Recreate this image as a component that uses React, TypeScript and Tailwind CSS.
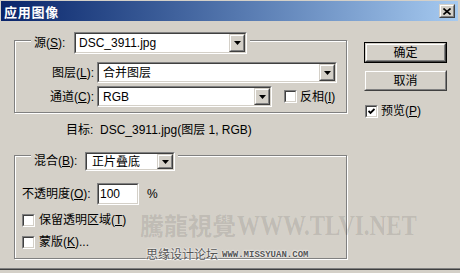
import React from 'react';

// Win2000 风格的「应用图像」对话框
const so = 'border border-t-[#808080] border-l-[#808080] border-b-white border-r-white';
const si = 'border border-t-[#404040] border-l-[#404040] border-b-[#d4d0c8] border-r-[#d4d0c8]';
const ro = 'border border-t-[#d4d0c8] border-l-[#d4d0c8] border-b-[#404040] border-r-[#404040]';
const ri = 'border border-t-white border-l-white border-b-[#808080] border-r-[#808080]';

function Key({ k }: { k: string }) {
  return <span className="underline underline-offset-[1px]">{k}</span>;
}

function Arrow() {
  return (
    <svg width="7" height="4" viewBox="0 0 7 4" aria-hidden="true">
      <path d="M0 0h7L3.5 4z" fill="#000" />
    </svg>
  );
}

function Combo({ text, className, pad = 'pl-[4px]' }: { text: string; className: string; pad?: string }) {
  return (
    <div className={`${so} ${className}`}>
      <div className={`${si} flex h-full bg-white`}>
        <div className={`flex flex-1 items-center leading-none ${pad}`}>{text}</div>
        <div className={`${ro} h-full w-[16px] bg-[#d4d0c8]`}>
          <div className={`${ri} flex h-full items-center justify-center`}>
            <Arrow />
          </div>
        </div>
      </div>
    </div>
  );
}

function Check({ on }: { on?: boolean }) {
  return (
    <div className={`${so} h-[13px] w-[13px] shrink-0`}>
      <div className={`${si} flex h-full items-center justify-center bg-white`}>
        {on && (
          <svg width="7" height="7" viewBox="0 0 7 7" aria-hidden="true">
            <path d="M0.5 3l2 2L6.5 1" stroke="#000" strokeWidth="1.8" fill="none" />
          </svg>
        )}
      </div>
    </div>
  );
}

function Btn({ label, def }: { label: string; def?: boolean }) {
  return (
    <div className={def ? 'h-[21px] w-[83px] border border-black' : 'h-[21px] w-[83px]'}>
      <div className={`${ro} h-full`}>
        <div className={`${ri} flex h-full items-center justify-center leading-none`}>{label}</div>
      </div>
    </div>
  );
}

export default function App() {
  return (
    <div className="relative h-[273px] w-[460px] overflow-hidden bg-[#d4d0c8] font-['Liberation_Sans','Noto_Sans_CJK_SC',sans-serif] text-[12px] text-black">
      <div className="flex h-[269px] flex-col border-b border-b-[#808080]">
        {/* 标题栏 */}
        <div className="ml-[1px] mr-[2px] mt-[1px] flex h-[20px] items-center justify-between bg-linear-to-r from-[#0a246a] to-[#a6caf0] pl-[3px] pr-[3px]">
          <span className="font-['Noto_Sans_CJK_SC',sans-serif] text-[13px] font-bold leading-none tracking-[0.75px] text-white">应用图像</span>
          <div className={`${ro} h-[14px] w-[16px] bg-[#d4d0c8]`}>
            <div className={`${ri} flex h-full items-center justify-center`}>
              <svg width="8" height="7" viewBox="0 0 8 7" aria-hidden="true">
                <path d="M0.5 0.5l7 6M7.5 0.5l-7 6" stroke="#000" strokeWidth="1.6" />
              </svg>
            </div>
          </div>
        </div>

        <div className="flex">
          {/* 左栏：两个分组框 */}
          <div className="ml-[14px] w-[333px] pt-[11px]">
            <fieldset className="w-[333px] border border-[#808080] pb-[5px] pl-[7px] pt-[13px] shadow-[1px_1px_0_#fff,inset_1px_1px_0_#fff]">
              <legend className="ml-[9px] h-[17px] bg-[#d4d0c8] px-[3px]">
                <div className="flex items-start">
                  <span className="w-[40px] pt-[4px] leading-[14px]">
                    源(<Key k="S" />):
                  </span>
                  <Combo text="DSC_3911.jpg" className="h-[22px] w-[173px]" pad="pl-[3px]" />
                </div>
              </legend>
              <div className="flex items-center">
                <span className="w-[75px] pr-[3px] text-right">
                  图层(<Key k="L" />):
                </span>
                <Combo text="合并图层" className="h-[21px] w-[240px]" />
              </div>
              <div className="mt-[3px] flex items-center">
                <span className="w-[75px] pr-[3px] text-right">
                  通道(<Key k="C" />):
                </span>
                <Combo text="RGB" className="h-[21px] w-[175px]" />
                <div className="ml-[12px]">
                  <Check />
                </div>
                <span className="ml-[3px]">
                  反相(<Key k="I" />)
                </span>
              </div>
            </fieldset>

            <div className="ml-[52px] mt-[10px] leading-[14px]">{'目标:\u00a0 DSC_3911.jpg(图层 1, RGB)'}</div>

            <fieldset className="mt-[15px] w-[333px] border border-[#808080] pb-[9px] pl-[7px] pt-[24px] shadow-[1px_1px_0_#fff,inset_1px_1px_0_#fff]">
              <legend className="ml-[9px] h-[7px] bg-[#d4d0c8] px-[3px]">
                <div className="flex items-start">
                  <span className="w-[51px] pt-[2px] leading-[14px]">
                    混合(<Key k="B" />):
                  </span>
                  <Combo text="正片叠底" className="h-[19px] w-[90px]" pad="pl-[5px]" />
                </div>
              </legend>
              <div className="flex items-center">
                <span className="w-[75px]">
                  不透明度(<Key k="O" />):
                </span>
                <div className={`${so} h-[22px] w-[42px]`}>
                  <div className={`${si} flex h-full items-center bg-white pl-[1px] leading-none`}>100</div>
                </div>
                <span className="ml-[8px]">%</span>
              </div>
              <div className="mt-[8px] flex items-center">
                <Check />
                <span className="ml-[4px] leading-[14px]">
                  保留透明区域(<Key k="T" />)
                </span>
              </div>
              <div className="mt-[8px] flex items-center">
                <Check />
                <span className="ml-[4px] leading-[14px]">
                  蒙版(<Key k="K" />)...
                </span>
              </div>
            </fieldset>
          </div>

          {/* 右栏：按钮 */}
          <div className="ml-[17px] pt-[21px]">
            <Btn label="确定" def />
            <div className="mt-[7px]">
              <Btn label="取消" />
            </div>
            <div className="ml-[1px] mt-[13px] flex items-center">
              <Check on />
              <span className="ml-[3px] leading-[14px]">
                预览(<Key k="P" />)
              </span>
            </div>
          </div>
        </div>
      </div>
      <div className="h-[1px] bg-[#404040]" />

      {/* 水印 */}
      <div className="pointer-events-none absolute left-[140px] top-[213px] flex items-center text-black/[0.11]">
        <span className="font-['Noto_Sans_CJK_TC',sans-serif] text-[24px] font-bold leading-none">騰龍視覺</span>
        <span className="ml-[1px] scale-y-[1.3] font-['Liberation_Serif',serif] text-[23px] font-bold leading-none">WWW.TLVI.NET</span>
      </div>
      <div className="pointer-events-none absolute left-[146px] top-[248px] flex items-center text-[#555] [text-shadow:0_0_2px_#fff,0_0_2px_#fff]">
        <span className="text-[12px] leading-[14px]">思缘设计论坛</span>
        <span className="ml-[4px] font-['Liberation_Mono',monospace] text-[9px] font-bold leading-none">WWW.MISSYUAN.COM</span>
      </div>
    </div>
  );
}
